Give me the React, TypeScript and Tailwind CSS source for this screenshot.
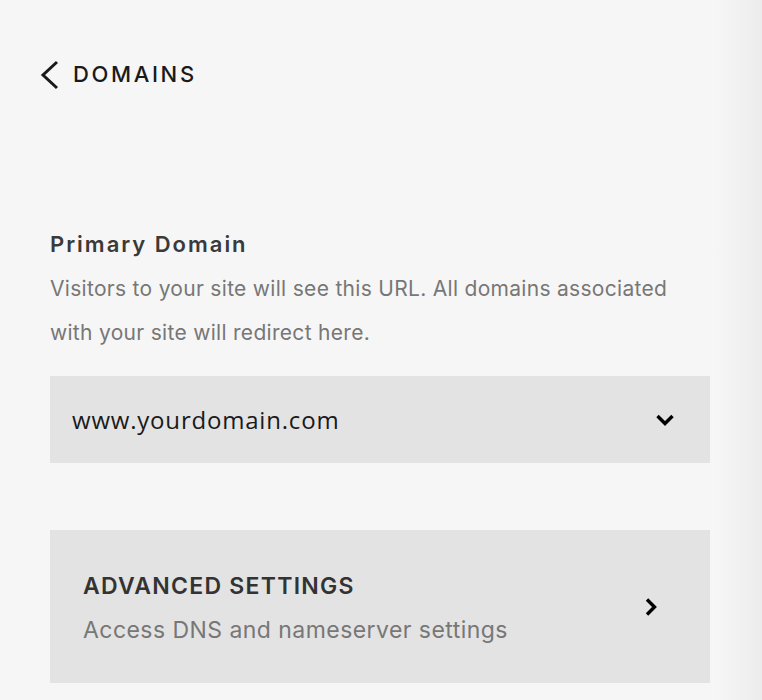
const Chevron = ({ dir }: { dir: 'down' | 'right' }) =>
  dir === 'down' ? (
    <svg width="20" height="14" viewBox="0 0 20 14">
      <path d="M2.5 3l7.5 7.5L17.5 3" fill="none" stroke="#000" strokeWidth="3.4" />
    </svg>
  ) : (
    <svg width="14" height="20" viewBox="0 0 14 20">
      <path d="M3 2.5l7.5 7.5L3 17.5" fill="none" stroke="#000" strokeWidth="3.4" />
    </svg>
  );

export default function App() {
  return (
    <div className="min-h-[700px] w-full bg-[linear-gradient(to_right,#f6f6f6_94%,#ececec)] font-['Inter',sans-serif]">
      <div className="pt-[58px] pl-[39px] flex items-center gap-[13px]">
        <svg width="21" height="30" viewBox="0 0 21 30">
          <path d="M18 2L4 15l14 13" fill="none" stroke="#1a1a1a" strokeWidth="3" />
        </svg>
        <span className="text-[22px] font-medium tracking-[0.12em] text-[#1a1a1a]">DOMAINS</span>
      </div>

      <div className="mt-[137px] mx-[50px] w-[660px]">
        <h2 className="text-[22px] font-semibold text-[#3a3a3a] tracking-[0.09em]">Primary Domain</h2>
        <p className="mt-[6px] text-[21px] leading-[44px] tracking-[0.3px] text-[#777]">
          Visitors to your site will see this URL. All domains associated with your site will redirect here.
        </p>

        <div className="mt-[21px] h-[87px] bg-[#e3e3e3] flex items-center justify-between pl-[22px] pr-[35px]">
          <span className="text-[24px] tracking-[0.8px] text-[#1a1a1a] font-['Open_Sans',sans-serif]">www.yourdomain.com</span>
          <Chevron dir="down" />
        </div>

        <div className="mt-[67px] h-[153px] bg-[#e3e3e3] flex items-center justify-between pl-[33px] pr-[52px]">
          <div className="flex flex-col pt-[2px]">
            <span className="text-[23px] leading-[28px] font-semibold tracking-[0.055em] text-[#333]">ADVANCED SETTINGS</span>
            <span className="mt-[16px] text-[23px] leading-[28px] tracking-[0.45px] text-[#777]">Access DNS and nameserver settings</span>
          </div>
          <Chevron dir="right" />
        </div>
      </div>
    </div>
  );
}
